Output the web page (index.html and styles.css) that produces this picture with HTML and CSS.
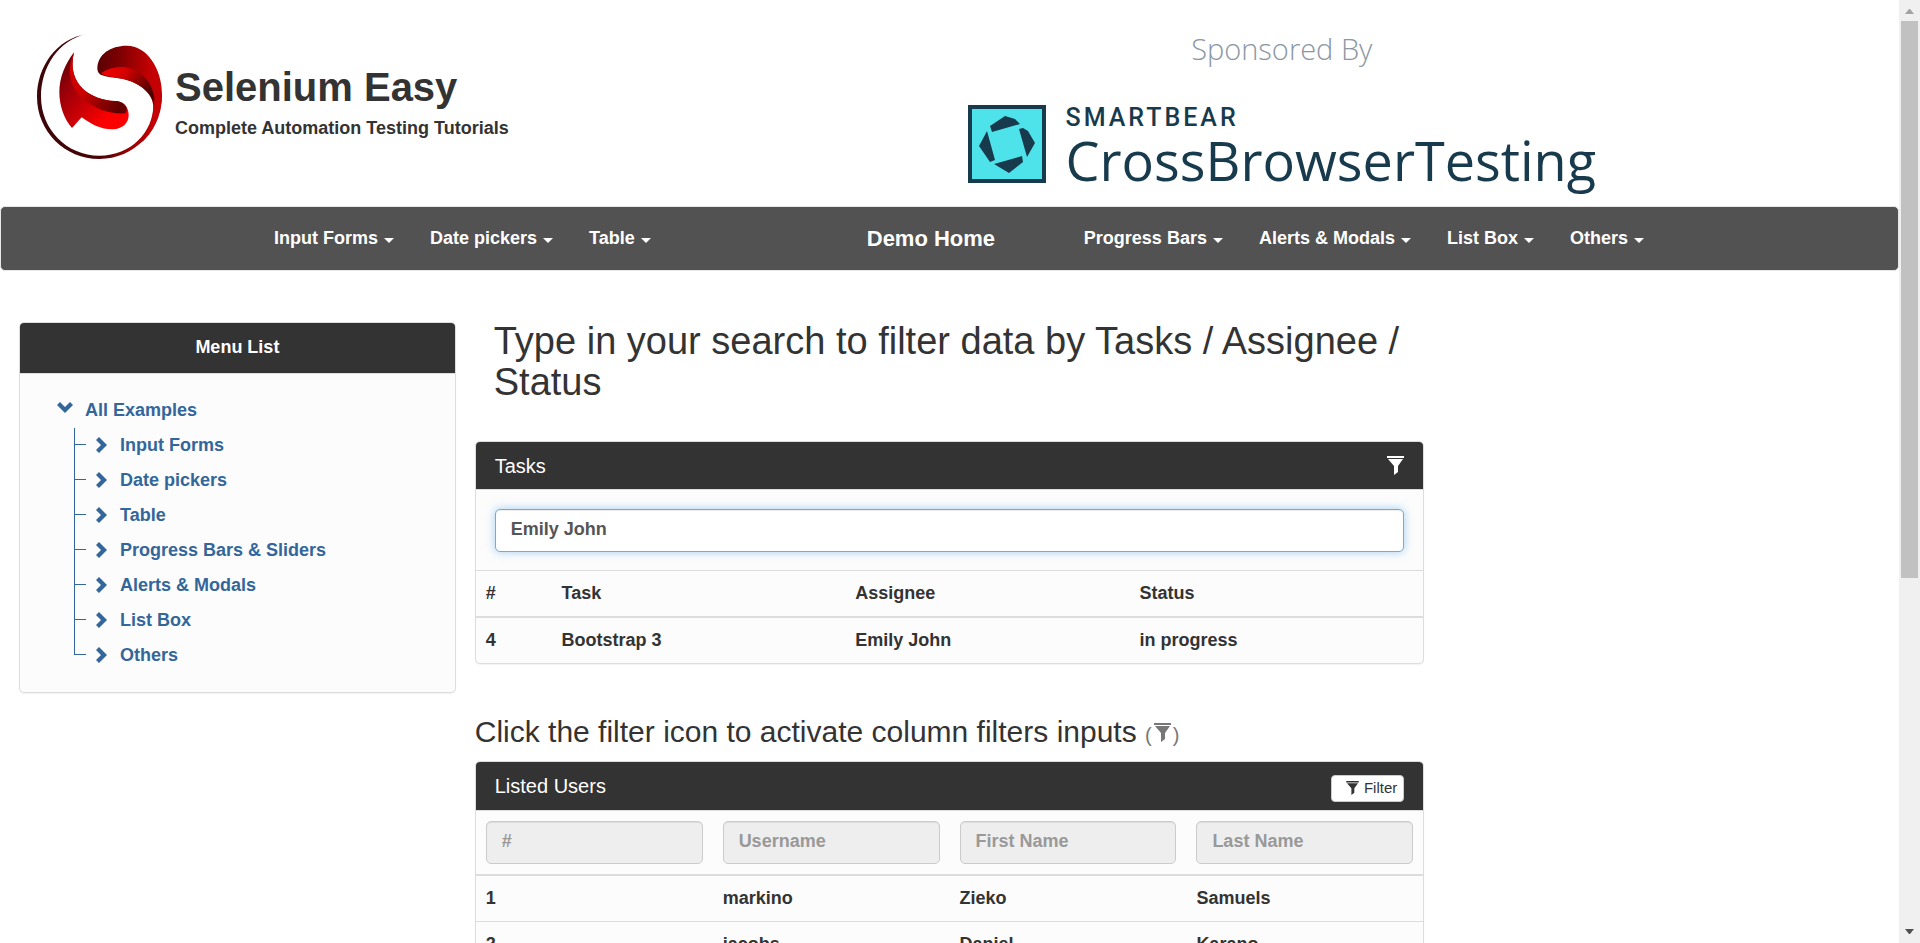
FILE: index.html
```html
<!DOCTYPE html>
<html lang="en">
<head>
<meta charset="utf-8">
<title>Selenium Easy - Table Data Search</title>
<link rel="stylesheet" href="styles.css">
</head>
<body>
<svg class="defs" aria-hidden="true">
  <symbol id="filter" viewBox="0 0 17 19"><path d="M0 0h17v2H0zM1 3h15l-5 7v6l-4 3v-9z"/></symbol>
  <symbol id="chevron" viewBox="0 0 11 16"><path d="M3 0l8 8-8 8-3-3 5-5-5-5z"/></symbol>
  <symbol id="chevron-down" viewBox="0 0 16 11"><path d="M0 3l3-3 5 5 5-5 3 3-8 8z"/></symbol>
</svg>
<div class="page">
  <header class="header">
    <div class="brand">
      <svg class="logo" viewBox="111 102 375 375" aria-hidden="true">
        <defs>
          <linearGradient id="ring" x1="0" x2="1" y1="0" y2="0"><stop offset="0" stop-color="#3c0608"/><stop offset=".5" stop-color="#4a0205"/><stop offset=".75" stop-color="#9c0003"/><stop offset="1" stop-color="#c40003"/></linearGradient>
          <linearGradient id="top" x1="0" x2="1" y1=".2" y2=".3"><stop offset="0" stop-color="#5a0002"/><stop offset=".35" stop-color="#800002"/><stop offset=".8" stop-color="#c20003"/><stop offset="1" stop-color="#c40003"/></linearGradient>
          <linearGradient id="fold" x1="0" x2="1" y1="0" y2=".5"><stop offset="0" stop-color="#f60000"/><stop offset=".4" stop-color="#d80000"/><stop offset="1" stop-color="#4c0001"/></linearGradient>
          <linearGradient id="left" x1="0" x2=".8" y1="0" y2=".7"><stop offset="0" stop-color="#4c0002"/><stop offset=".35" stop-color="#96000a"/><stop offset="1" stop-color="#fa0000"/></linearGradient>
          <linearGradient id="inner" x1="0" x2="1" y1="0" y2=".7"><stop offset="0" stop-color="#d00004"/><stop offset=".45" stop-color="#cc0000"/><stop offset="1" stop-color="#620001"/></linearGradient>
        </defs>
        <path fill="url(#ring)" d="M260 102C170 116 111 200 111 290c0 104 84 187 187 187 104 0 188-84 188-197l-26 35c0 80-66 152-162 152-97 0-175-79-175-177 0-88 52-170 137-188z"/>
        <path fill="url(#top)" d="M292 205c0-42 40-68 88-68 61 0 106 68 106 147 0 66-28 114-62 144 22-30 36-70 36-106 0-46-48-76-90-85-30-6-50-5-68-13-7-4-10-10-10-19z"/>
        <path fill="url(#fold)" d="M303 220c20-14 42-20 64-19 55 3 88 44 96 91l-1 26c-6-44-52-72-92-81-26-6-50-6-67-17z"/>
        <path fill="url(#left)" d="M222 157c-27 35-44 77-44 119 0 41 15 83 38 108l29-32c30 22 60 37 94 36 28-1 47-18 47-43 0-24-15-42-42-42-66-2-146-45-122-146z"/>
        <path fill="url(#inner)" d="M222 157c-24 56-14 109 34 145 31 24 75 41 120 38 13-15-4-37-32-37-66-2-146-45-122-146z"/>
      </svg>
      <div class="brand-text">
        <h1 class="title">Selenium Easy</h1>
        <p class="tagline">Complete Automation Testing Tutorials</p>
      </div>
    </div>
    <a class="sponsor" href="#">
      <span class="sponsor-by">Sponsored By</span>
      <span class="sponsor-logo">
        <svg class="sponsor-mark" viewBox="0 0 78 78" aria-hidden="true">
          <path fill="#183a4d" d="M0 0h78v78H0z"/><path fill="#4ee3ea" d="M4 4h70v70H4z"/>
          <path fill="#183a4d" d="M37 11l10 3 5 5-28 8-2-6zM51 24l4-1 5 3 7 12-8 14zM54 51l1 6-14 11-15-9zM19 26l8 29-5 2-11-16z"/>
        </svg>
        <span class="sponsor-name"><span class="smartbear">SMARTBEAR</span><span class="cbt">CrossBrowserTesting</span></span>
      </span>
    </a>
  </header>

  <nav class="navbar">
    <div class="nav-inner">
      <a class="nav-link" href="#">Input Forms<i class="caret"></i></a>
      <a class="nav-link" href="#">Date pickers<i class="caret"></i></a>
      <a class="nav-link" href="#">Table<i class="caret"></i></a>
      <a class="nav-home" href="#">Demo Home</a>
      <a class="nav-link" href="#">Progress Bars<i class="caret"></i></a>
      <a class="nav-link" href="#">Alerts &amp; Modals<i class="caret"></i></a>
      <a class="nav-link" href="#">List Box<i class="caret"></i></a>
      <a class="nav-link" href="#">Others<i class="caret"></i></a>
    </div>
  </nav>

  <div class="columns">
    <aside class="sidebar">
      <section class="panel">
        <div class="panel-head menu-head">Menu List</div>
        <div class="tree">
          <a class="tree-root" href="#"><svg class="chevron-down"><use href="#chevron-down"/></svg>All Examples</a>
          <ul class="tree-list">
            <li class="tree-item"><a href="#"><svg class="chevron"><use href="#chevron"/></svg>Input Forms</a></li>
            <li class="tree-item"><a href="#"><svg class="chevron"><use href="#chevron"/></svg>Date pickers</a></li>
            <li class="tree-item"><a href="#"><svg class="chevron"><use href="#chevron"/></svg>Table</a></li>
            <li class="tree-item"><a href="#"><svg class="chevron"><use href="#chevron"/></svg>Progress Bars &amp; Sliders</a></li>
            <li class="tree-item"><a href="#"><svg class="chevron"><use href="#chevron"/></svg>Alerts &amp; Modals</a></li>
            <li class="tree-item"><a href="#"><svg class="chevron"><use href="#chevron"/></svg>List Box</a></li>
            <li class="tree-item"><a href="#"><svg class="chevron"><use href="#chevron"/></svg>Others</a></li>
          </ul>
        </div>
      </section>
    </aside>

    <main class="content">
      <h2 class="heading">Type in your search to filter data by Tasks / Assignee / Status</h2>
      <section class="panel">
        <div class="panel-head"><h3 class="panel-title">Tasks</h3><button class="icon-button" aria-label="Toggle task filter"><svg class="filter"><use href="#filter"/></svg></button></div>
        <div class="search"><input class="field focused" type="text" value="Emily John" aria-label="Filter by Task / Assignee / Status"></div>
        <table class="table tasks">
          <thead><tr><th class="col-id">#</th><th class="col-task">Task</th><th class="col-assignee">Assignee</th><th>Status</th></tr></thead>
          <tbody><tr><td>4</td><td>Bootstrap 3</td><td>Emily John</td><td>in progress</td></tr></tbody>
        </table>
      </section>

      <h3 class="subheading">Click the filter icon to activate column filters inputs <small class="hint">(<svg class="filter"><use href="#filter"/></svg>)</small></h3>
      <section class="panel">
        <div class="panel-head users-head"><h3 class="panel-title">Listed Users</h3><button class="filter-button"><svg class="filter-small"><use href="#filter"/></svg>Filter</button></div>
        <table class="table users">
          <thead><tr>
            <th><input class="field" type="text" placeholder="#" aria-label="#" disabled></th>
            <th><input class="field" type="text" placeholder="Username" aria-label="Username" disabled></th>
            <th><input class="field" type="text" placeholder="First Name" aria-label="First Name" disabled></th>
            <th><input class="field" type="text" placeholder="Last Name" aria-label="Last Name" disabled></th>
          </tr></thead>
          <tbody>
            <tr><td>1</td><td>markino</td><td>Zieko</td><td>Samuels</td></tr>
            <tr><td>2</td><td>jacobs</td><td>Daniel</td><td>Karano</td></tr>
          </tbody>
        </table>
      </section>
    </main>
  </div>
</div>
<div class="scrollbar" aria-hidden="true">
  <svg class="scroll-arrow" viewBox="0 0 21 21"><path fill="#a3a3a3" d="M10 9h1l4 5H6z"/></svg>
  <div class="scroll-thumb"></div>
  <div class="scroll-rest"></div>
  <svg class="scroll-arrow" viewBox="0 0 21 21"><path fill="#505050" d="M6 7h9l-4 5h-1z"/></svg>
</div>
</body>
</html>
```

FILE: styles.css
```css
* { box-sizing: border-box; }

body {
  margin: 0;
  height: 100vh;
  overflow: hidden;
  display: flex;
  background: #fff;
  color: #333;
  font: bold 18px/25px "Liberation Sans", Arial, sans-serif;
}

h1, h2, h3, p, ul { margin: 0; padding: 0; }
a { color: #33669a; text-decoration: none; }
.defs { display: none; }
svg { fill: currentColor; }

.page { flex: 1; min-width: 0; }

/* Header */
.header { display: grid; grid-template-columns: 1fr 1fr; height: 206px; }
.brand { display: flex; gap: 13px; padding: 34px 0 0 37px; }
.logo { width: 125px; height: 125px; }
.brand-text { padding-top: 31px; }
.title { font-size: 40px; line-height: 44px; margin-bottom: 7px; }
.sponsor { display: flex; flex-direction: column; justify-self: start; padding: 28px 0 0 18px; color: #183a4d; }
.sponsor-by { align-self: center; font: 300 29px/42px "Open Sans", sans-serif; color: #8a97a3; }
.sponsor-logo { display: flex; gap: 20px; padding-top: 35px; }
.sponsor-mark { width: 78px; height: 78px; }
.sponsor-name { display: flex; flex-direction: column; }
.smartbear { font: 500 25px/26px Roboto, sans-serif; letter-spacing: 3px; }
.cbt { font: 400 54px/58px "Open Sans", sans-serif; }

/* Navigation */
.navbar { background: #525252; border: 1px solid #e7e7e7; border-radius: 5px; height: 65px; }
.nav-inner { display: flex; align-items: center; max-width: 1425px; height: 63px; margin: 0 auto; padding-left: 19px; }
.nav-link { display: flex; align-items: center; gap: 6px; padding: 0 18px; color: #fff; }
.nav-home { margin: 0 auto 0 180px; padding: 0 18px; font-size: 22px; color: #fff; }
.caret { border: 5px solid transparent; border-top-color: #fff; border-bottom: 0; margin-top: 4px; }

/* Columns */
.columns { display: grid; grid-template-columns: 1fr 2fr 1fr; }
.sidebar { padding: 51px 19px 0; }
.panel { background: #fcfcfc; border: 1px solid #ddd; border-radius: 5px; box-shadow: 0 1px 1px rgba(0, 0, 0, .05); }
.panel-head { display: flex; justify-content: space-between; align-items: center; height: 48px; padding: 0 19px; border-bottom: 1px solid #ddd; border-radius: 4px 4px 0 0; background: #333; color: #fff; }
.menu-head { justify-content: center; height: 51px; padding-bottom: 1px; }
.panel-title { font-size: 20px; font-weight: normal; line-height: 22px; }

/* Tree */
.tree { padding: 19px 19px 19px 37px; }
.tree-root { display: flex; align-items: center; gap: 12px; height: 35px; }
.chevron-down { width: 16px; height: 11px; margin-bottom: 6px; }
.tree-list { list-style: none; margin-left: 17px; }
.tree-item { position: relative; padding-left: 22px; }
.tree-item a { display: flex; align-items: center; gap: 13px; height: 35px; }
.chevron { width: 11px; height: 16px; margin-bottom: 2px; }
.tree-item::before { content: ""; position: absolute; left: 0; top: 0; bottom: 0; border-left: 1px solid #33669a; }
.tree-item:last-child::before { bottom: 18px; }
.tree-item::after { content: ""; position: absolute; left: 0; top: 16px; width: 12px; border-top: 1px solid #33669a; }

/* Content */
.heading { padding: 50px 19px 38px; font-size: 38px; font-weight: normal; line-height: 41px; }
.icon-button { display: flex; padding: 0; border: 0; background: none; color: #fff; }
.filter { width: 17px; height: 19px; }
.search { padding: 19px 19px 18px; border-bottom: 1px solid #ddd; }
.field { display: block; width: 100%; height: 43px; padding: 0 15px 2px; border: 1px solid #ccc; border-radius: 5px; background: #fff; color: #555; font: inherit; box-shadow: inset 0 1px 1px rgba(0, 0, 0, .075); }
.field:disabled { background: #eee; }
.field::placeholder { color: #999; }
.focused { border-color: #66afe9; outline: 0; box-shadow: inset 0 1px 1px rgba(0, 0, 0, .075), 0 0 10px rgba(102, 175, 233, .6); }

.table { width: 100%; border-collapse: collapse; table-layout: fixed; text-align: left; }
.table th { padding: 10px; border-bottom: 2px solid #ddd; }
.table td { padding: 10px; border-bottom: 1px solid #ddd; }
.tasks tbody tr:last-child td { border-bottom: 0; }
.col-id { width: 8%; }
.col-task { width: 31%; }
.col-assignee { width: 30%; }

.subheading { padding: 51px 0 9px; font-size: 30px; font-weight: normal; line-height: 33px; }
.hint { font-size: 20px; color: #777; }
.hint .filter { margin: 0 2px; }
.users-head { height: 49px; }
.filter-button { display: flex; align-items: center; gap: 5px; height: 27px; padding: 0 6px 0 14px; margin-top: 4px; border: 1px solid #ccc; border-radius: 4px; background: #fff; color: #333; font: 15px/22px "Liberation Sans", Arial, sans-serif; }
.filter-small { width: 13px; height: 14px; }

/* Scrollbar */
.scrollbar { display: flex; flex-direction: column; width: 21px; background: #f0f0f0; }
.scroll-arrow { width: 21px; height: 21px; }
.scroll-thumb { flex: 557; margin: 0 2px; background: #c1c1c1; }
.scroll-rest { flex: 344; }
```
